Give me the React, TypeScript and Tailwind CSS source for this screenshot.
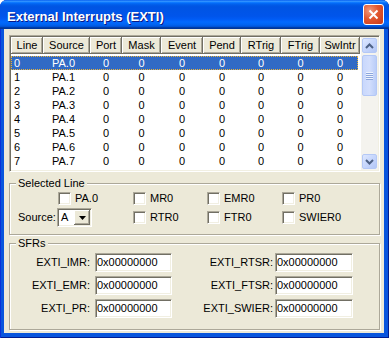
import React from "react";

const sunken =
  "border border-t-[#ACA899] border-l-[#ACA899] border-b-white border-r-white shadow-[inset_1px_1px_0_#716F64,inset_-1px_-1px_0_#F1EFE2] bg-white";
const raised =
  "bg-[#ECE9D8] shadow-[inset_-1px_-1px_0_#716F64,inset_1px_1px_0_#fff,inset_-2px_-2px_0_#ACA899]";

const cols = [
  { name: "Line", w: "w-[32px]", cell: "text-left pl-[3px]" },
  { name: "Source", w: "w-[47px]", cell: "text-left pl-[9px]" },
  { name: "Port", w: "w-[32px]", cell: "text-center" },
  { name: "Mask", w: "w-[39px]", cell: "text-center" },
  { name: "Event", w: "w-[42px]", cell: "text-center" },
  { name: "Pend", w: "w-[38px]", cell: "text-center" },
  { name: "RTrig", w: "w-[40px]", cell: "text-center" },
  { name: "FTrig", w: "w-[39px]", cell: "text-center" },
  { name: "SwIntr", w: "w-[40px]", cell: "text-center" },
];

function Check({ label }: { label: string }) {
  return (
    <div className="flex items-center gap-[4px]">
      <span className={`block w-[13px] h-[13px] ${sunken}`} />
      <span>{label}</span>
    </div>
  );
}

function Field({ w }: { w: string }) {
  return (
    <div className={`${w} h-[19px] ${sunken} flex items-center pl-[1px]`}>
      0x00000000
    </div>
  );
}

function ScrollBtn({ up }: { up: boolean }) {
  return (
    <div className="h-[17px] w-[17px] p-[1px]">
      <div className="h-full w-full rounded-[2px] border border-[#B4C8F6] bg-[linear-gradient(135deg,#DDE7FE_0%,#C6D6FC_50%,#B3C6F5_100%)] flex items-center justify-center">
        <svg width="9" height="6" viewBox="0 0 9 6">
          <path
            d={up ? "M1 5 L4.5 1.5 L8 5" : "M1 1 L4.5 4.5 L8 1"}
            fill="none"
            stroke="#4D6185"
            strokeWidth="2"
          />
        </svg>
      </div>
    </div>
  );
}

export default function App() {
  const rows = Array.from({ length: 8 }, (_, i) => i);
  return (
    <div className="w-[389px] h-[338px] font-['Liberation_Sans',Arial,sans-serif] text-[11px] text-black leading-[13px] select-none">
      <div className="w-[389px] h-[338px] flex flex-col rounded-t-[7px] overflow-hidden bg-[#0855DD] shadow-[inset_1px_0_0_#0831D9,inset_-1px_0_0_#001C8F,inset_0_-1px_0_#001C8F]">
        {/* Title bar */}
        <div className="h-[29px] flex items-center justify-between pl-[7px] pr-[5px] pt-[3px] bg-[linear-gradient(180deg,#0058EE_0%,#3593FF_4%,#288EFF_6%,#127DFF_8%,#036FFC_10%,#0262EE_14%,#0057E5_20%,#0054E3_24%,#0055EB_56%,#005BF5_66%,#026AFE_76%,#0062EF_86%,#0052D6_92%,#0040AB_94%,#003092_100%)]">
          <span className="text-white font-bold text-[13px] [text-shadow:1px_1px_0_#0A1883]">
            External Interrupts (EXTI)
          </span>
          <div className="w-[21px] h-[21px] mt-[-3px] rounded-[3px] border border-white bg-[radial-gradient(circle_at_30%_30%,#F19A7E_0%,#E2572F_45%,#C8391A_100%)] flex items-center justify-center">
            <svg width="11" height="11" viewBox="0 0 11 11">
              <path d="M1.5 1.5 L9.5 9.5 M9.5 1.5 L1.5 9.5" stroke="white" strokeWidth="2" />
            </svg>
          </div>
        </div>

        {/* Body */}
        <div className="flex-1 flex pl-[4px] pr-[5px] pb-[5px]">
          <div className="w-[380px] h-[304px] bg-[#ECE9D8] flex flex-col pl-[5px] pt-[6px]">
            {/* List view */}
            <div className="w-[371px] h-[137px] border border-t-[#ACA899] border-l-[#ACA899] border-b-white border-r-white shadow-[inset_1px_1px_0_#716F64,inset_-1px_-1px_0_#F1EFE2] bg-white p-[1px] flex">
              <div className="w-[350px] flex flex-col">
                <div className="flex h-[17px]">
                  {cols.map((c) => (
                    <div
                      key={c.name}
                      className={`${c.w} h-[17px] ${raised} flex items-center justify-center`}
                    >
                      {c.name}
                    </div>
                  ))}
                </div>
                <div className="mt-[2px] w-[347px] flex flex-col">
                  {rows.map((r) => (
                    <div
                      key={r}
                      className={`h-[14px] flex overflow-hidden ${
                        r === 0
                          ? "bg-[#316AC5] text-white outline outline-1 outline-dotted outline-[#E8B33A] outline-offset-[-1px]"
                          : ""
                      }`}
                    >
                      {cols.map((c, ci) => (
                        <div
                          key={c.name}
                          className={`${c.w} shrink-0 h-[14px] leading-[14px] ${c.cell}`}
                        >
                          {ci === 0 ? r : ci === 1 ? `PA.${r}` : 0}
                        </div>
                      ))}
                    </div>
                  ))}
                </div>
              </div>
              <div className="w-[17px] flex flex-col bg-[#F4F3EE]">
                <ScrollBtn up />
                <div className="h-[43px] w-[17px] p-[1px]">
                  <div className="h-full w-full rounded-[2px] border border-[#B4C8F6] bg-[linear-gradient(90deg,#C9D8FC_0%,#D2DEFD_50%,#BACDF8_100%)] flex flex-col items-center justify-center gap-[1px]">
                    {[0, 1, 2, 3].map((g) => (
                      <div key={g} className="w-[7px] h-[1px] bg-[#EEF4FE] shadow-[0_1px_0_#8CA6DC]" />
                    ))}
                  </div>
                </div>
                <div className="flex-1" />
                <ScrollBtn up={false} />
              </div>
            </div>

            {/* Selected Line */}
            <div className="relative mt-[11px] w-[371px] h-[52px] border border-[#ACA899] shadow-[inset_1px_1px_0_#fff,1px_1px_0_#fff] pt-[5px]">
              <span className="absolute left-[6px] top-[-7px] bg-[#ECE9D8] px-[2px]">
                Selected Line
              </span>
              <div className="flex h-[19px] items-center pl-[48px]">
                <div className="w-[75px]">
                  <Check label="PA.0" />
                </div>
                <div className="w-[74px]">
                  <Check label="MR0" />
                </div>
                <div className="w-[75px]">
                  <Check label="EMR0" />
                </div>
                <Check label="PR0" />
              </div>
              <div className="flex h-[19px] items-center">
                <div className="w-[123px] flex items-center">
                  <span className="w-[47px] pl-[8px]">Source:</span>
                  <div className={`w-[35px] h-[19px] ${sunken} flex items-center p-[1px]`}>
                    <span className="flex-1 pl-[2px]">A</span>
                    <div className={`w-[16px] h-full ${raised} flex items-center justify-center`}>
                      <svg width="7" height="4" viewBox="0 0 7 4">
                        <path d="M0 0 H7 L3.5 4 Z" fill="black" />
                      </svg>
                    </div>
                  </div>
                </div>
                <div className="w-[74px]">
                  <Check label="RTR0" />
                </div>
                <div className="w-[75px]">
                  <Check label="FTR0" />
                </div>
                <Check label="SWIER0" />
              </div>
            </div>

            {/* SFRs */}
            <div className="relative mt-[8px] w-[371px] h-[87px] border border-[#ACA899] shadow-[inset_1px_1px_0_#fff,1px_1px_0_#fff] pt-[9px]">
              <span className="absolute left-[6px] top-[-7px] bg-[#ECE9D8] px-[2px]">SFRs</span>
              <div className="flex flex-col gap-[4px]">
                {[
                  ["EXTI_IMR:", "EXTI_RTSR:"],
                  ["EXTI_EMR:", "EXTI_FTSR:"],
                  ["EXTI_PR:", "EXTI_SWIER:"],
                ].map(([a, b]) => (
                  <div key={a} className="flex items-center h-[19px]">
                    <span className="w-[80px] text-right">{a}</span>
                    <div className="ml-[5px]">
                      <Field w="w-[77px]" />
                    </div>
                    <span className="w-[101px] text-right">{b}</span>
                    <div className="ml-[2px]">
                      <Field w="w-[78px]" />
                    </div>
                  </div>
                ))}
              </div>
            </div>
          </div>
        </div>
      </div>
    </div>
  );
}
